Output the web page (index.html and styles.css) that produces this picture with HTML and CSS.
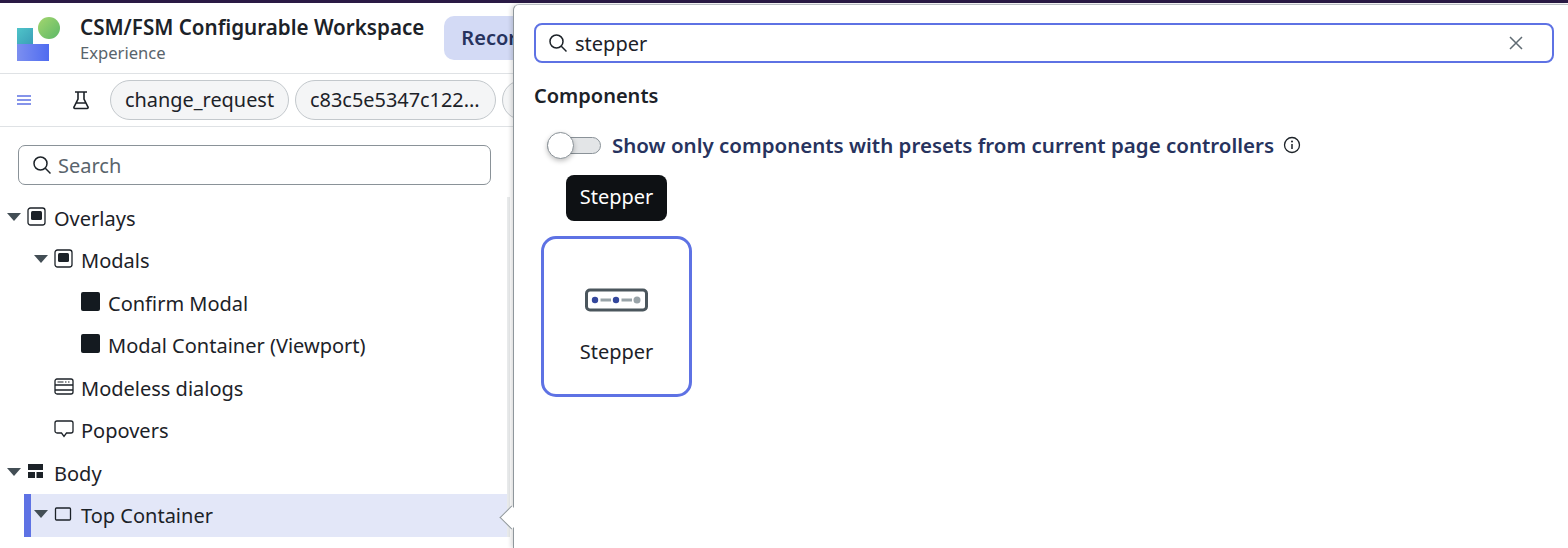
FILE: index.html
```html
<!DOCTYPE html>
<html>
  <head>
    <title>CSM/FSM Configurable Workspace</title>
    <link rel="stylesheet" href="styles.css">
  </head>
  <body>
    <div class="topstrip"></div>
    <div class="workspace">
      <div class="sidebar">
        <div class="header">
          <svg class="logo" width="44" height="46" viewBox="0 0 44 46">
            <defs>
              <linearGradient id="logo-teal" x1="0" y1="0" x2="1" y2="1">
                <stop offset="0" stop-color="#4fc4c9" />
                <stop offset="1" stop-color="#3a9fb8" />
              </linearGradient>
              <linearGradient id="logo-blue" x1="0" y1="0" x2="1" y2="0">
                <stop offset="0" stop-color="#7c8ff0" />
                <stop offset="1" stop-color="#4f6cf0" />
              </linearGradient>
              <linearGradient id="logo-green" x1="0" y1="0" x2="1" y2="1">
                <stop offset="0" stop-color="#a4d66e" />
                <stop offset="1" stop-color="#5cb868" />
              </linearGradient>
            </defs>
            <rect x="0" y="11" width="16" height="16" fill="url(#logo-teal)" />
            <rect x="0" y="27" width="32" height="17" fill="url(#logo-blue)" />
            <circle cx="32" cy="11" r="11" fill="url(#logo-green)" />
          </svg>
          <div class="titles">
            <div class="app-title">CSM/FSM Configurable Workspace</div>
            <div class="app-sub">Experience</div>
          </div>
          <div class="record-btn">Record</div>
        </div>

        <div class="toolbar">
          <svg class="menu-icon" width="14" height="10" viewBox="0 0 14 10">
            <path d="M0 1h14M0 5h14M0 9h14" stroke="#5e72e4" stroke-width="1.4" />
          </svg>
          <svg class="flask-icon" width="18" height="20" viewBox="0 0 18 20">
            <path d="M3 2h12M6 2v7L2 17a1 1 0 0 0 1 1.500h12a1 1 0 0 0 1-1.500L12 9V2M4 13h10" fill="none" stroke="#1c2228" stroke-width="1.600" />
          </svg>
          <span class="chip">change_request</span>
          <span class="chip chip-id">c83c5e5347c122...</span>
          <span class="chip chip-empty"></span>
        </div>

        <div class="search-wrap">
          <div class="search">
            <svg width="20" height="20" viewBox="0 0 20 20">
              <circle cx="8.500" cy="8.500" r="6.500" fill="none" stroke="#1c2228" stroke-width="1.500" />
              <path d="M13.300 13.300L18.500 18.500" stroke="#1c2228" stroke-width="1.500" />
            </svg>
            <span>Search</span>
          </div>
        </div>

        <div class="tree">
          <div class="row level-0">
            <span class="caret"></span>
            <svg class="node-icon" width="20" height="20" viewBox="0 0 20 20">
              <rect x="1" y="1" width="17" height="17" rx="2.500" fill="none" stroke="#1c2228" stroke-width="1.300" />
              <rect x="4" y="4" width="11" height="9" rx="1.500" fill="#1c2228" />
            </svg>
            <span>Overlays</span>
          </div>
          <div class="row level-1">
            <span class="caret"></span>
            <svg class="node-icon" width="20" height="20" viewBox="0 0 20 20">
              <rect x="1" y="1" width="17" height="17" rx="2.500" fill="none" stroke="#1c2228" stroke-width="1.300" />
              <rect x="4" y="4" width="11" height="9" rx="1.500" fill="#1c2228" />
            </svg>
            <span>Modals</span>
          </div>
          <div class="row level-2">
            <span class="solid-square"></span>
            <span>Confirm Modal</span>
          </div>
          <div class="row level-2">
            <span class="solid-square"></span>
            <span>Modal Container (Viewport)</span>
          </div>
          <div class="row level-1 no-caret">
            <svg class="node-icon" width="20" height="18" viewBox="0 0 20 18">
              <rect x="1" y="1" width="18" height="15" rx="2" fill="none" stroke="#1c2228" stroke-width="1.300" />
              <path d="M3.500 4h6M11 4h1.500M14 4h1.500" stroke="#1c2228" stroke-width="1.200" />
              <path d="M1 7h18M1 12h18" stroke="#1c2228" stroke-width="1.300" />
            </svg>
            <span>Modeless dialogs</span>
          </div>
          <div class="row level-1 no-caret">
            <svg class="node-icon" width="20" height="18" viewBox="0 0 20 18">
              <path d="M3 1h14a2 2 0 0 1 2 2v8a2 2 0 0 1-2 2h-4.500L10 16.500 7.500 13H3a2 2 0 0 1-2-2V3a2 2 0 0 1 2-2z" fill="none" stroke="#1c2228" stroke-width="1.300" />
            </svg>
            <span>Popovers</span>
          </div>
          <div class="row level-0">
            <span class="caret"></span>
            <svg class="node-icon" width="20" height="18" viewBox="0 0 20 18">
              <rect x="1" y="1" width="15" height="6" fill="#1c2228" />
              <rect x="1" y="9" width="7" height="6" fill="#1c2228" />
              <rect x="9.500" y="9" width="6.500" height="6" fill="#1c2228" />
            </svg>
            <span>Body</span>
          </div>
          <div class="row level-1 selected">
            <span class="caret"></span>
            <svg class="node-icon" width="20" height="18" viewBox="0 0 20 18">
              <rect x="1.500" y="3" width="15" height="12" rx="1" fill="none" stroke="#1c2228" stroke-width="1.300" />
            </svg>
            <span>Top Container</span>
          </div>
        </div>
      </div>

      <div class="popover">
        <span class="arrow"></span>
        <div class="comp-search">
          <svg width="20" height="20" viewBox="0 0 20 20">
            <circle cx="8.500" cy="8.500" r="6.500" fill="none" stroke="#1c2228" stroke-width="1.500" />
            <path d="M13.300 13.300L18.500 18.500" stroke="#1c2228" stroke-width="1.500" />
          </svg>
          <span class="comp-query">stepper</span>
          <svg width="16" height="16" viewBox="0 0 16 16">
            <path d="M2 2l12 12M14 2L2 14" stroke="#5f6b73" stroke-width="1.500" />
          </svg>
        </div>
        <h2>Components</h2>
        <div class="toggle-row">
          <span class="toggle"><span class="knob"></span></span>
          <span class="toggle-label">Show only components with presets from current page controllers</span>
          <svg width="18" height="18" viewBox="0 0 18 18">
            <circle cx="9" cy="9" r="7.500" fill="none" stroke="#1c2228" stroke-width="1.300" />
            <path d="M9 8v5" stroke="#1c2228" stroke-width="1.500" />
            <circle cx="9" cy="5.500" r="1" fill="#1c2228" />
          </svg>
        </div>
        <div class="tooltip">Stepper</div>
        <div class="card">
          <svg width="64" height="24" viewBox="0 0 64 24">
            <rect x="1.500" y="2" width="60" height="20" rx="3.500" fill="none" stroke="#4b565d" stroke-width="3" />
            <path d="M15.500 12h10.500M36.500 12h10.500" stroke="#98a3a8" stroke-width="3" />
            <circle cx="10" cy="12" r="3.200" fill="#33479c" />
            <circle cx="31" cy="12" r="3.200" fill="#33479c" />
            <circle cx="52" cy="12" r="3.500" fill="#98a3a8" />
          </svg>
          <div class="card-label">Stepper</div>
        </div>
      </div>
    </div>
  </body>
</html>
```

FILE: styles.css
```css
* {
  box-sizing: border-box;
}
html,
body {
  height: 100%;
}
body {
  font-family: "Noto Sans", sans-serif;
  background-color: #fff;
  color: #1c2228;
  margin: 0;
  overflow: hidden;
}
.topstrip {
  height: 3px;
  background-color: #2a1a45;
}
.workspace {
  position: relative;
  height: 545px;
}

/* left column */
.sidebar {
  width: 513px;
  height: 100%;
  overflow: hidden;
}
.header {
  display: flex;
  align-items: center;
  height: 71px;
  padding-left: 17px;
  border-bottom: 1px solid #dfe2e5;
}
.logo {
  flex: none;
  margin-right: 19px;
  margin-top: 4px;
}
.titles {
  padding-top: 3px;
}
.app-title {
  font-size: 20.600px;
  font-weight: 600;
  line-height: 27px;
  white-space: nowrap;
}
.app-sub {
  font-size: 16.600px;
  line-height: 24px;
  color: #59646c;
}
.record-btn {
  flex: none;
  margin-left: 20px;
  height: 44px;
  line-height: 44px;
  padding: 0 17px;
  font-size: 20px;
  font-weight: 600;
  color: #27335e;
  background-color: #d3daf5;
  border-radius: 10px;
}
.toolbar {
  display: flex;
  align-items: center;
  height: 53px;
  padding-left: 17px;
  border-bottom: 1px solid #dfe2e5;
  white-space: nowrap;
}
.menu-icon {
  flex: none;
  margin-right: 41px;
}
.flask-icon {
  flex: none;
  margin-right: 20px;
}
.chip {
  flex: none;
  height: 40px;
  line-height: 38px;
  padding: 0 14px;
  margin-right: 6px;
  font-size: 19.900px;
  background-color: #f4f5f6;
  border: 1px solid #c3c8cc;
  border-radius: 20px;
}
.chip-id {
  width: 201px;
}
.chip-empty {
  width: 60px;
}
.search-wrap {
  padding: 18px 22px 0 18px;
}
.search {
  display: flex;
  align-items: center;
  gap: 6px;
  height: 40px;
  padding: 0 13px;
  border: 1px solid #8a9298;
  border-radius: 7px;
  font-size: 20px;
  color: #59646c;
}

/* component tree */
.tree {
  margin-top: 11.800px;
  margin-right: 3px;
  border-right: 3px solid #e9ebec;
}
.row {
  display: flex;
  align-items: center;
  height: 42.500px;
  font-size: 20px;
  white-space: nowrap;
}
.level-0 {
  padding-left: 7px;
}
.level-1 {
  padding-left: 34px;
}
.level-1.no-caret {
  padding-left: 54px;
}
.level-2 {
  padding-left: 81px;
}
.caret {
  flex: none;
  width: 0;
  height: 0;
  margin-right: 6px;
  margin-top: -3px;
  border-left: 7px solid transparent;
  border-right: 7px solid transparent;
  border-top: 8px solid #434e55;
}
.node-icon {
  flex: none;
  margin-right: 7px;
  margin-top: -3px;
}
.solid-square {
  flex: none;
  width: 19px;
  height: 19px;
  margin-right: 8px;
  margin-top: -4px;
  background-color: #141a20;
  border-radius: 2px;
}
.selected {
  margin-left: 24px;
  padding-left: 3px;
  background-color: #e3e7f8;
  border-left: 7px solid #5e72e4;
}

/* component picker */
.popover {
  position: absolute;
  top: 1px;
  left: 513px;
  right: 0;
  bottom: 0;
  padding: 18px 14px 0 20px;
  background-color: #fff;
  border-top: 1px solid #b9bec2;
  border-left: 1px solid #8f979c;
  border-top-left-radius: 6px;
  box-shadow: -2px 0 4px rgba(0, 0, 0, 0.14);
}
.arrow {
  position: absolute;
  left: -11px;
  top: 504px;
  width: 17px;
  height: 17px;
  background-color: #fff;
  border-left: 1px solid #8f979c;
  border-bottom: 1px solid #8f979c;
  transform: rotate(45deg);
}
.comp-search {
  display: flex;
  align-items: center;
  height: 40px;
  padding: 0 28px 0 12px;
  border: 2px solid #5e72e4;
  border-radius: 8px;
  font-size: 20px;
}
.comp-query {
  flex: 1;
  margin-left: 7px;
}
.popover h2 {
  margin: 19px 0 0;
  font-size: 20px;
  line-height: 27px;
  font-weight: 600;
}
.toggle-row {
  display: flex;
  align-items: center;
  margin-top: 22px;
  padding-left: 13px;
}
.toggle {
  position: relative;
  flex: none;
  width: 54px;
  height: 17px;
  margin-right: 11px;
  background-color: #e3e5e7;
  border: 1px solid #8a9298;
  border-radius: 9px;
}
.knob {
  position: absolute;
  left: -1px;
  top: -6px;
  width: 27px;
  height: 27px;
  background-color: #fff;
  border: 1px solid #8a9298;
  border-radius: 50%;
  box-shadow: 0 2px 5px rgba(0, 0, 0, 0.25);
}
.toggle-label {
  font-size: 20.500px;
  font-weight: 600;
  color: #27335e;
  margin-right: 9px;
  white-space: nowrap;
}
.tooltip {
  width: 101px;
  height: 46px;
  margin: 16px 0 0 32px;
  line-height: 44px;
  text-align: center;
  font-size: 20px;
  color: #fff;
  background-color: #0e1114;
  border-radius: 8px;
}
.card {
  display: flex;
  flex-direction: column;
  align-items: center;
  width: 151px;
  height: 161px;
  margin: 15px 0 0 7px;
  padding-top: 49px;
  border: 3px solid #5e72e4;
  border-radius: 15px;
}
.card-label {
  margin-top: 26px;
  font-size: 20px;
  line-height: 27px;
}
```
